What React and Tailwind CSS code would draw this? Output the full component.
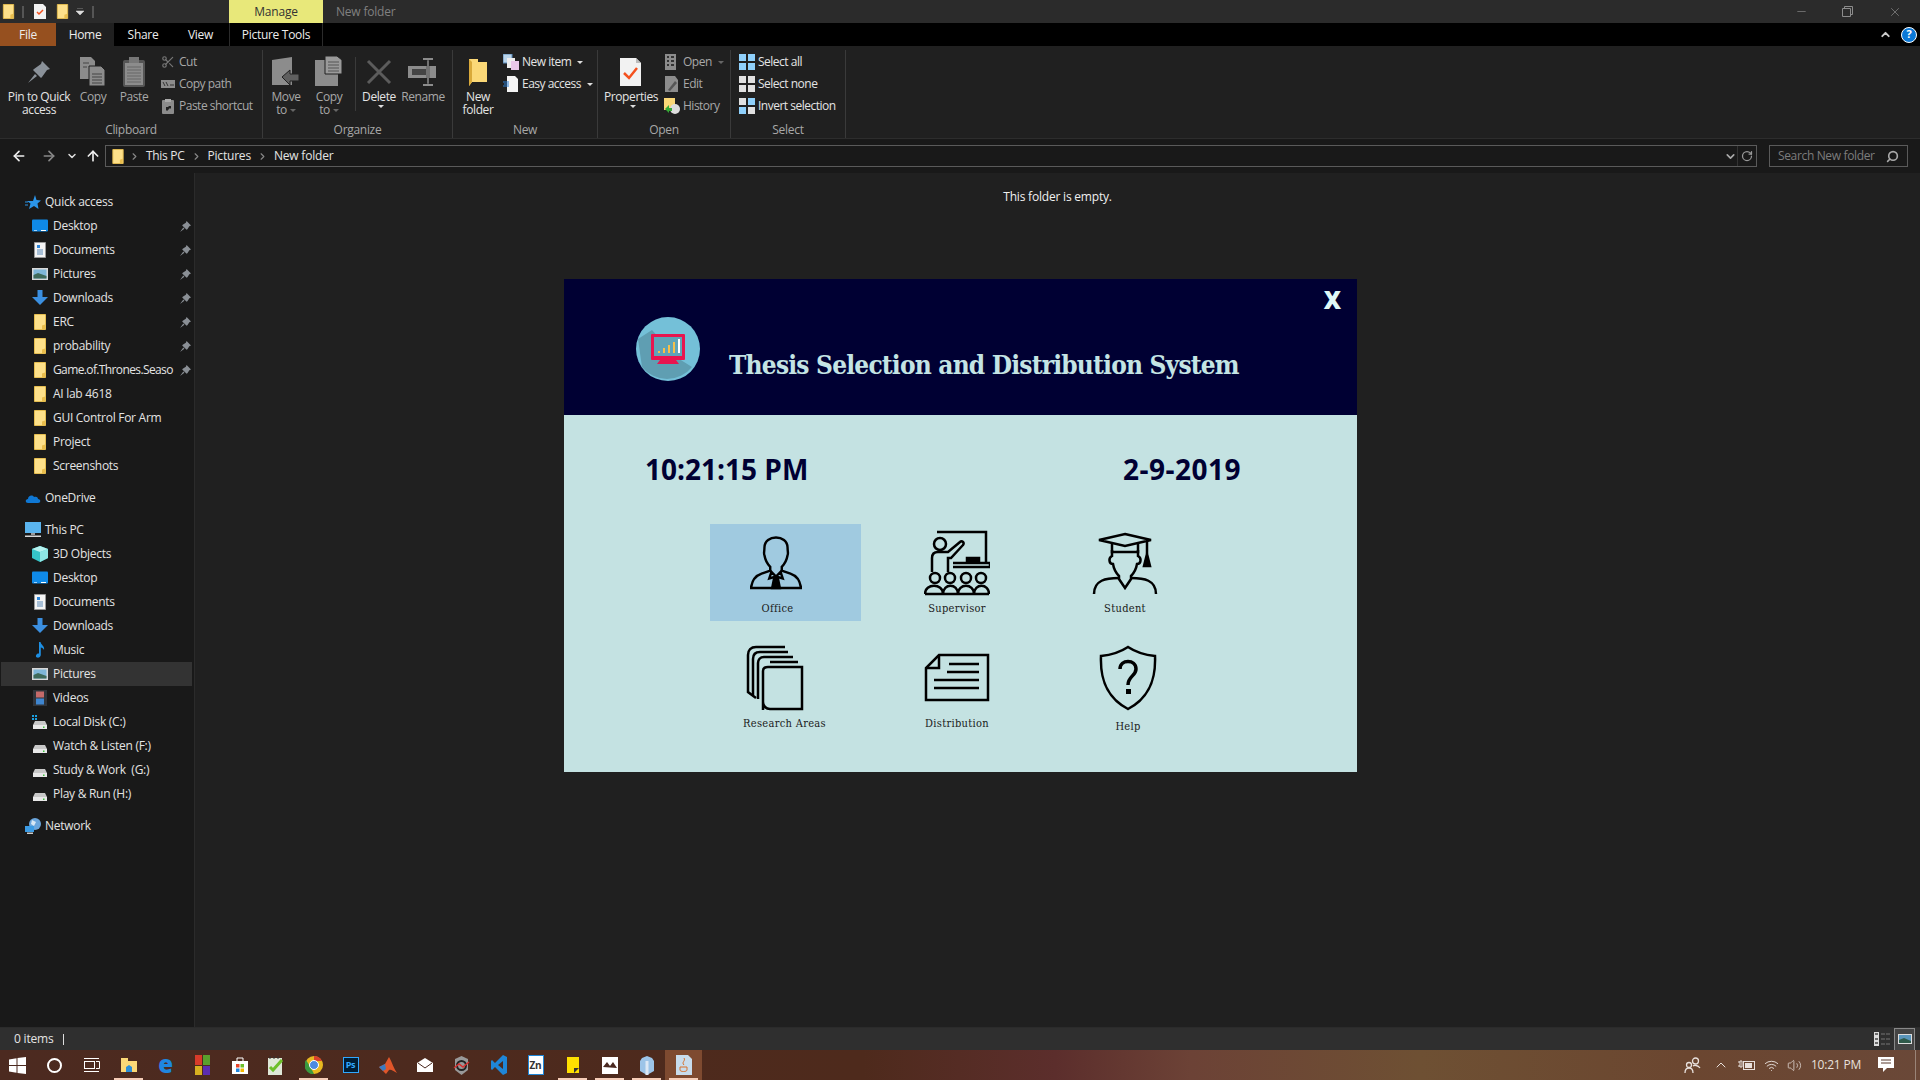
import React from "react";
import { Scissors, ChevronRight, ChevronDown, ChevronUp, ArrowLeft, ArrowRight, ArrowUp, RotateCw, Search, X, Minus, Volume2, Wifi } from "lucide-react";

const Folder = ({ w = 12, h = 16 }) => (
  <svg width={w} height={h} viewBox="0 0 12 16" className="shrink-0">
    <path d="M0.5 0.5H11.5V15.5H0.5Z" fill="#fde08a" stroke="#e5bd50" />
    <path d="M8 15V11.5L11 10.5V15Z" fill="#e9bd4c" />
  </svg>
);

const Desktop = () => (
  <svg width="16" height="16" viewBox="0 0 16 16"><rect y="1.5" width="16" height="12" rx="1" fill="#0f8ae8" /><rect x="9" y="12" width="5" height="1" fill="#fff" /><rect x="2" y="12" width="3" height="1" fill="#9fd4ff" /></svg>
);
const Doc = () => (
  <svg width="16" height="16" viewBox="0 0 16 16"><path d="M2.5 0.5H13.5V15.5H2.5Z" fill="#f4f4f4" stroke="#999" /><path d="M5 8H11M5 10H11M5 12H11" stroke="#5a8ab8" /><rect x="5" y="3" width="3" height="3" fill="#2f86d8" /></svg>
);
const Pic = () => (
  <svg width="16" height="16" viewBox="0 0 16 16"><rect y="2" width="16" height="12" fill="#d8d8d8" /><rect x="1.5" y="3.5" width="13" height="9" fill="#7fb6d8" /><path d="M1.5 9L6 7L14.5 10V12.5H1.5Z" fill="#3f6a5a" /></svg>
);
const Down = () => (
  <svg width="16" height="16" viewBox="0 0 16 16"><path d="M5.5 0H10.5V7H16L8 15L0 7H5.5Z" fill="#3b8fe0" /></svg>
);
const Cube = () => (
  <svg width="16" height="16" viewBox="0 0 16 16"><path d="M8 0L16 3V12L8 16L0 12V3Z" fill="#35c4c8" /><path d="M8 6L16 3V12L8 16Z" fill="#8ee6e4" /><path d="M8 0L16 3L8 6L0 3Z" fill="#b6f2ef" /></svg>
);
const Music = () => (
  <svg width="16" height="16" viewBox="0 0 16 16"><path d="M7 0H8.5C9 3 13 4 12 8C11.5 6.5 10 5.5 8.8 5.5V13C8.8 15 6.5 16 5 15.5C3.5 15 3.5 13 5 12C5.7 11.5 6.5 11.4 7 11.6Z" fill="#1d8fe3" /></svg>
);
const Film = () => (
  <svg width="16" height="16" viewBox="0 0 16 16"><rect x="1" width="14" height="16" fill="#30343a" /><rect x="4" y="1.5" width="8" height="6" fill="#c46a6a" /><rect x="4" y="8.5" width="8" height="6" fill="#3f86d0" /></svg>
);
const Drive = ({ win }) => (
  <svg width="16" height="16" viewBox="0 0 16 16">
    {win && <path d="M0 1H2V3H0ZM3 1H5V3H3ZM0 4H2V6H0ZM3 4H5V6H3Z" fill="#1ba1e2" />}
    <path d="M3 7H13L15 11H1Z" fill="#c8c8c8" />
    <rect x="1" y="11" width="14" height="4" fill="#e8e8e8" />
    <rect x="11" y="12.5" width="1.5" height="1.5" fill="#3fbf3f" />
  </svg>
);
const Star = () => (
  <svg width="16" height="16" viewBox="0 0 16 16"><path d="M10 1L11.5 6L16 6.5L12.5 9.5L13.5 15L9 12L4 15L5.5 9.5L2 7H8Z" fill="#2b95e9" /><path d="M0 8H3M0 11H3" stroke="#2b95e9" /></svg>
);
const Cloud = () => (
  <svg width="16" height="16" viewBox="0 0 16 16"><path d="M3 13C0 13 0 9 3 9C3 6 7 4 9 7C12 6 13 8 13 9C16 9 16 13 13 13Z" fill="#0f78d4" /></svg>
);
const Monitor = () => (
  <svg width="16" height="16" viewBox="0 0 16 16"><rect width="16" height="11" fill="#5ab4ee" /><rect x="6" y="11" width="4" height="2" fill="#9a9a9a" /><rect y="13.5" width="16" height="1.5" fill="#d8d8d8" /></svg>
);
const Globe = () => (
  <svg width="16" height="16" viewBox="0 0 16 16"><circle cx="10" cy="6" r="6" fill="#6aa5dc" /><path d="M7 2L11 4L9 8L6 6Z" fill="#d8e8f5" /><rect y="8" width="9" height="6" fill="#3b9be4" /><rect x="2" y="14.5" width="6" height="1.5" fill="#ccc" /></svg>
);
const PinSmall = () => (
  <svg width="11" height="11" viewBox="0 0 10 10"><path d="M6 0L10 4L8.5 4.7L6.7 7.5L6 8L2 4L2.5 3.3L5.3 1.5ZM3 6L0 10L4 7Z" fill="#8a8f95" /></svg>
);

const SideRow = ({ icon, label, top, pin, selected, gap, tight }) => (
  <div className={`flex items-center h-6 ${top ? "pl-[25px] gap-[4px]" : "pl-[32px] gap-[5px]"} ${gap ? "mt-2" : ""} ${selected ? "bg-[#333333] ml-px mr-[2px] !pl-[31px]" : ""}`}>
    <span className="w-4 flex justify-center shrink-0">{icon}</span>
    <span className={`text-[12px] text-[#e4e4e4] whitespace-pre w-[124px] ${tight ? "tracking-[-0.62px]" : "tracking-[-0.28px]"}`}>{label}</span>
    {pin && <span className="-ml-[2px] shrink-0"><PinSmall /></span>}
  </div>
);

const Sidebar = () => (
  <div className="w-[195px] shrink-0 bg-[#191919] border-r border-[#2b2b2b] pt-[17px]">
    <SideRow top icon={<Star />} label="Quick access" />
    <SideRow icon={<Desktop />} label="Desktop" pin />
    <SideRow icon={<Doc />} label="Documents" pin />
    <SideRow icon={<Pic />} label="Pictures" pin />
    <SideRow icon={<Down />} label="Downloads" pin />
    <SideRow icon={<Folder />} label="ERC" pin />
    <SideRow icon={<Folder />} label="probability" pin />
    <SideRow tight icon={<Folder />} label="Game.of.Thrones.Seaso" pin />
    <SideRow icon={<Folder />} label="AI lab 4618" />
    <SideRow icon={<Folder />} label="GUI Control For Arm" />
    <SideRow icon={<Folder />} label="Project" />
    <SideRow icon={<Folder />} label="Screenshots" />
    <SideRow top gap icon={<Cloud />} label="OneDrive" />
    <SideRow top gap icon={<Monitor />} label="This PC" />
    <SideRow icon={<Cube />} label="3D Objects" />
    <SideRow icon={<Desktop />} label="Desktop" />
    <SideRow icon={<Doc />} label="Documents" />
    <SideRow icon={<Down />} label="Downloads" />
    <SideRow icon={<Music />} label="Music" />
    <SideRow selected icon={<Pic />} label="Pictures" />
    <SideRow icon={<Film />} label="Videos" />
    <SideRow icon={<Drive win />} label="Local Disk (C:)" />
    <SideRow icon={<Drive />} label="Watch & Listen (F:)" />
    <SideRow icon={<Drive />} label="Study & Work  (G:)" />
    <SideRow icon={<Drive />} label="Play & Run (H:)" />
    <SideRow top gap icon={<Globe />} label="Network" />
  </div>
);

const Caret = ({ dim }) => (
  <span className={`inline-block ml-[3px] align-middle border-x-[3px] border-x-transparent border-t-[3px] ${dim ? "border-t-[#666]" : "border-t-[#ddd]"}`} />
);

const BigBtn = ({ w, icon, lines, dim, caretLine }) => (
  <div className={`${w} flex flex-col items-center shrink-0`}>
    <div className="h-[40px] pt-[3px] flex items-center justify-center">{icon}</div>
    <div className={`text-[12px] leading-[13px] text-center whitespace-nowrap tracking-[-0.4px] ${dim ? "text-[#a8a8a8]" : "text-[#e4e4e4]"}`}>
      {lines.map((l, i) => <div key={i}>{l}{caretLine === i && <Caret dim={dim} />}</div>)}
      {caretLine === lines.length && <div className="leading-[6px]"><Caret /></div>}
    </div>
  </div>
);

const SmallBtn = ({ icon, label, dim, caret, dimCaret }) => (
  <div className="flex items-center h-[22px] gap-[3px] whitespace-nowrap">
    <span className="w-4 h-4 flex items-center justify-center">{icon}</span>
    <span className={`text-[12px] tracking-[-0.5px] ${dim ? "text-[#a8a8a8]" : "text-[#e4e4e4]"}`}>{label}</span>
    {caret && <Caret dim={dimCaret} />}
  </div>
);

const SmallList = ({ className = "", children }) => <div className={`pt-[1px] ${className}`}>{children}</div>;

const Group = ({ w, label, children }) => (
  <div className={`${w} h-[88px] shrink-0 flex flex-col border-r border-[#3a3a3a]`}>
    <div className="flex-1 flex">{children}</div>
    <div className="text-[12px] leading-[16px] text-center text-[#a8a8a8] tracking-[-0.3px]">{label}</div>
  </div>
);

const PinBig = () => (
  <svg width="24" height="24" viewBox="0 0 24 24"><path d="M15 1L23 9L20 10L15 17L14 18L6 10L7 9L14 4ZM8 14L1 23L10 16Z" fill="#8a9199" /></svg>
);
const CopyBig = () => (
  <svg width="26" height="30" viewBox="0 0 26 30"><path d="M0 0H11L15 4V22H0Z" fill="#8c8c8c" /><path d="M9 9H21L25 13V29H9Z" fill="#8c8c8c" stroke="#202020" /><path d="M12 17H22M12 20H22M12 23H22M12 26H22M3 6H9M3 10H7" stroke="#444" /></svg>
);
const PasteBig = () => (
  <svg width="22" height="30" viewBox="0 0 22 30"><rect y="3" width="22" height="27" rx="2" fill="#555" /><rect x="2" y="6" width="18" height="22" fill="#8c8c8c" /><rect x="6" y="0" width="10" height="6" fill="#777" /><path d="M4 10H18M4 13H18M4 16H18M4 19H18M4 22H18M4 25H18" stroke="#666" /></svg>
);
const MoveBig = () => (
  <svg width="28" height="30" viewBox="0 0 28 30"><path d="M0 3L20 0V28H0Z" fill="#8c8c8c" /><path d="M10 20L18 13V17H27V24H18V28Z" fill="#5f5f5f" stroke="#202020" /></svg>
);
const CopyToBig = () => (
  <svg width="28" height="32" viewBox="0 0 28 32"><path d="M0 4H23V30H0Z" fill="#8c8c8c" /><path d="M10 0H22L27 4V18H10Z" fill="#9a9a9a" stroke="#202020" /><path d="M13 6H24M13 9H24M13 12H24M13 15H24" stroke="#555" /></svg>
);
const DeleteBig = () => (
  <svg width="26" height="26" viewBox="0 0 26 26"><path d="M2 2L24 24M24 2L2 24" stroke="#5c5c5c" strokeWidth="3" /></svg>
);
const RenameBig = () => (
  <svg width="30" height="28" viewBox="0 0 30 28"><rect y="8" width="28" height="12" fill="#8c8c8c" /><rect x="4" y="11" width="14" height="6" fill="#444" /><rect x="19" y="2" width="2" height="24" fill="#8c8c8c" stroke="#202020" strokeWidth="0.5" /><path d="M15 1H25M15 27H25" stroke="#8c8c8c" strokeWidth="2" /></svg>
);
const NewFolderBig = () => (
  <svg width="20" height="28" viewBox="0 0 20 28"><path d="M1 1L10 1V4H19V24H4L1 28Z" fill="#fbd877" /><path d="M1 1L4 4V24L1 28Z" fill="#d9a93a" /></svg>
);
const PropsBig = () => (
  <svg width="22" height="28" viewBox="0 0 22 28"><path d="M0 0H16L21 5V28H0Z" fill="#f2f2f2" /><path d="M16 0V5H21" fill="#bbb" /><path d="M4 15L9 20L17 10" stroke="#f4511e" strokeWidth="2.5" fill="none" /></svg>
);
const TileGrid = ({ a, b, c, d }) => (
  <svg width="16" height="16" viewBox="0 0 16 16"><rect width="7" height="7" fill={a} /><rect x="9" width="7" height="7" fill={b} /><rect y="9" width="7" height="7" fill={c} /><rect x="9" y="9" width="7" height="7" fill={d} /></svg>
);

const Ribbon = () => (
  <div className="h-[93px] bg-[#202020] border-b border-[#2d2d2d] flex items-start pt-[4px] shrink-0">
    <Group w="w-[263px]" label="Clipboard">
      <BigBtn w="w-[78px]" icon={<PinBig />} lines={["Pin to Quick", "access"]} />
      <BigBtn w="w-[30px]" icon={<CopyBig />} lines={["Copy"]} dim />
      <BigBtn w="w-[52px]" icon={<PasteBig />} lines={["Paste"]} dim />
      <SmallList>
        <SmallBtn icon={<Scissors size={14} color="#777" />} label="Cut" dim />
        <SmallBtn icon={<svg width="14" height="8"><rect width="14" height="8" fill="#8c8c8c" /><path d="M2 2L4 6M5 2L7 6M9 5H13" stroke="#333" /></svg>} label="Copy path" dim />
        <SmallBtn icon={<svg width="12" height="15"><rect y="1" width="12" height="14" rx="1" fill="#8c8c8c" /><rect x="3" width="6" height="3" fill="#aaa" /><path d="M4 11V8H7L6 7H9V10L8 9L5 12" fill="#222" /></svg>} label="Paste shortcut" dim />
      </SmallList>
    </Group>
    <Group w="w-[190px]" label="Organize">
      <BigBtn w="w-[46px]" icon={<MoveBig />} lines={["Move", "to"]} caretLine={1} dim />
      <BigBtn w="w-[40px]" icon={<CopyToBig />} lines={["Copy", "to"]} caretLine={1} dim />
      <div className="w-px h-[54px] mt-[7px] ml-[6px] bg-[#3a3a3a]" />
      <BigBtn w="w-[46px]" icon={<DeleteBig />} lines={["Delete"]} caretLine={1} />
      <BigBtn w="w-[42px]" icon={<RenameBig />} lines={["Rename"]} dim />
    </Group>
    <Group w="w-[145px]" label="New">
      <BigBtn w="w-[50px]" icon={<NewFolderBig />} lines={["New", "folder"]} />
      <SmallList>
        <SmallBtn icon={<svg width="16" height="16"><rect width="9" height="9" fill="#b9d4ea" stroke="#5a8ab8" /><rect x="4" y="4" width="8" height="10" fill="#eee" /><rect x="8" y="7" width="8" height="9" fill="#e8c8e8" /></svg>} label="New item" caret />
        <SmallBtn icon={<svg width="16" height="16"><path d="M4 0H12L15 3V16H4Z" fill="#f4f4f4" /><path d="M0 6H6M1 8H6M0 10H6" stroke="#2b7fd4" /></svg>} label="Easy access" caret />
      </SmallList>
    </Group>
    <Group w="w-[133px]" label="Open">
      <BigBtn w="w-[66px]" icon={<PropsBig />} lines={["Properties"]} caretLine={1} />
      <SmallList>
        <SmallBtn icon={<svg width="14" height="16"><path d="M0 0H11V16H0Z" fill="#8c8c8c" /><path d="M2 3H4M6 3H9M2 7H4M6 7H9M2 11H4M6 11H9" stroke="#333" strokeWidth="2" /></svg>} label="Open" dim caret dimCaret />
        <SmallBtn icon={<svg width="14" height="16"><path d="M0 0H10L13 4V16H0Z" fill="#8c8c8c" /><path d="M3 14L10 5L12 7L5 15Z" fill="#555" /></svg>} label="Edit" dim />
        <SmallBtn icon={<svg width="16" height="16"><rect width="11" height="12" fill="#fbd877" /><circle cx="11" cy="11" r="5" fill="#ddd" /><path d="M1 11L5 7V10H8V13H5V15Z" fill="#35a835" /></svg>} label="History" dim />
      </SmallList>
    </Group>
    <Group w="w-[115px]" label="Select">
      <SmallList className="pl-2">
        <SmallBtn icon={<TileGrid a="#8fd0fb" b="#8fd0fb" c="#8fd0fb" d="#8fd0fb" />} label="Select all" />
        <SmallBtn icon={<TileGrid a="#e0e0e0" b="#e0e0e0" c="#e0e0e0" d="#e0e0e0" />} label="Select none" />
        <SmallBtn icon={<TileGrid a="#e0e0e0" b="#8fd0fb" c="#8fd0fb" d="#e0e0e0" />} label="Invert selection" />
      </SmallList>
    </Group>
  </div>
);

const Crumb = ({ label }) => (
  <>
    <ChevronRight size={11} color="#888" strokeWidth={2.5} className="mx-[6px] shrink-0" />
    <span className="text-[12px] text-[#e4e4e4]">{label}</span>
  </>
);

const AddressBar = () => (
  <div className="h-[34px] bg-[#191919] flex items-center pl-[11px] pr-3 shrink-0">
    <ArrowLeft size={16} color="#eee" strokeWidth={2.5} />
    <ArrowRight size={16} color="#888" strokeWidth={2.5} className="ml-[14px]" />
    <ChevronDown size={12} color="#ddd" strokeWidth={3} className="ml-[9px]" />
    <ArrowUp size={16} color="#eee" strokeWidth={2.5} className="ml-[7px]" />
    <div className="ml-[4px] flex-1 h-[22px] border border-[#5a5a5a] flex items-center pl-[6px]">
      <Folder w={12} h={15} />
      <ChevronRight size={11} color="#888" strokeWidth={2.5} className="ml-[5px] mr-[6px]" />
      <span className="text-[12px] text-[#e4e4e4] tracking-[-0.3px]">This PC</span>
      <Crumb label="Pictures" />
      <Crumb label="New folder" />
      <ChevronDown size={13} color="#aaa" strokeWidth={3} className="ml-auto mr-0" />
      <div className="w-px h-full bg-[#333]" />
      <RotateCw size={12} color="#999" strokeWidth={2.5} className="mx-[3px]" />
    </div>
    <div className="ml-3 w-[139px] h-[22px] border border-[#5a5a5a] flex items-center justify-between pl-2 pr-[8px]">
      <span className="text-[12px] text-[#7c7c7c] tracking-[-0.35px]">Search New folder</span>
      <Search size={13} color="#aaa" strokeWidth={3} className="-scale-x-100" />
    </div>
  </div>
);

const TitleBar = () => (
  <div className="h-[23px] bg-[#2b2b2b] flex items-center shrink-0">
    <div className="w-[229px] flex items-center pl-[2px]">
      <Folder w={13} h={15} />
      <div className="w-[2px] h-3 bg-[#555] mx-[7px]" />
      <svg width="12" height="15" viewBox="0 0 12 15" className="ml-[3px]"><path d="M0 0H9L12 3V15H0Z" fill="#f2f2f2" /><path d="M3 8L5 10L9 6" stroke="#f4511e" strokeWidth="1.5" fill="none" /></svg>
      <span className="w-[10px]" />
      <Folder w={13} h={15} />
      <svg width="8" height="8" viewBox="0 0 8 8" className="ml-[7px]"><path d="M1 0H7M0 3H8L4 7Z" fill="#ddd" stroke="#ddd" strokeWidth="0.5" /></svg>
      <div className="w-[2px] h-3 bg-[#555] ml-[8px]" />
    </div>
    <div className="w-[94px] h-full bg-[#e8e87a] text-[12px] text-[#333] flex items-center justify-center">Manage</div>
    <div className="text-[12px] text-[#808080] ml-[13px]">New folder</div>
    <div className="ml-auto flex items-center text-[#8c8c8c]">
      <div className="w-[46px] flex justify-center"><Minus size={13} strokeWidth={1.2} /></div>
      <div className="w-[46px] flex justify-center">
        <svg width="11" height="11" viewBox="0 0 11 11" fill="none" stroke="currentColor"><path d="M0.5 2.5H8.5V10.5H0.5ZM2.5 2.5V0.5H10.5V8.5H8.5" /></svg>
      </div>
      <div className="w-[50px] flex justify-center"><X size={14} strokeWidth={1.2} /></div>
    </div>
  </div>
);

const TabBar = () => (
  <div className="h-[23px] bg-black flex items-stretch shrink-0 text-[12px] text-[#ececec] tracking-[-0.3px]">
    <div className="w-[56px] bg-[#96501f] flex items-center justify-center">File</div>
    <div className="w-[58px] bg-[#202020] flex items-center justify-center">Home</div>
    <div className="w-[58px] flex items-center justify-center">Share</div>
    <div className="w-[57px] flex items-center justify-center">View</div>
    <div className="w-[94px] border-x border-[#2b2b2b] flex items-center justify-center">Picture Tools</div>
    <div className="ml-auto flex items-center">
      <ChevronUp size={13} color="#ccc" strokeWidth={3.5} className="mr-[9px]" />
      <div className="w-[16px] h-[16px] rounded-full bg-[#0a78d7] border border-white text-white text-[11px] font-bold flex items-center justify-center mr-[3px]">?</div>
    </div>
  </div>
);

const LogoIcon = () => (
  <svg width="64" height="64" viewBox="0 0 64 64">
    <circle cx="32" cy="32" r="32" fill="#74c0d8" />
    <path d="M2 22L16 13L40 40L56 50A32 32 0 0 1 6 50Z" fill="#5f9eb2" />
    <rect x="15" y="17" width="34" height="26" rx="1" fill="#e8154f" />
    <rect x="18" y="20" width="28" height="19" fill="#5fa4b8" />
    <path d="M24 43H40L43 47H21Z" fill="#e8154f" />
    <path d="M23 36V34M28 36V31M33 36V28M38 36V25" stroke="#f5c04a" strokeWidth="2" />
    <path d="M43 36V22" stroke="#fff" strokeWidth="2" />
  </svg>
);

const OfficeIcon = () => (
  <svg width="52" height="56" viewBox="0 0 54 56" fill="none" stroke="#000" strokeWidth="2.5">
    <path d="M15 12C15 -2 39 -2 39 12C39 16 40 18 39 20C38 26 35 30 33 32V36L42 39C48 41 52 46 53 54H1C2 46 6 41 12 39L21 36V32C19 30 16 26 15 20C14 18 15 16 15 12Z" />
    <path d="M21 36L27 42L33 36M22 38L20 44L27 42L34 44L32 38" />
    <path d="M25 44H29L31 54H23Z" fill="#000" />
  </svg>
);
const SupervisorIcon = () => (
  <svg width="66" height="66" viewBox="0 0 66 66" fill="none" stroke="#000" strokeWidth="2.5">
    <path d="M13 2H62V32M29 37H66V33H29" />
    <rect x="43" y="28" width="12" height="4" fill="#000" />
    <circle cx="16" cy="14" r="6" />
    <path d="M8 42V28C8 24 10 22 14 22H24L36 12C38 10 41 13 39 15L27 28H24V42" />
    <g>
      <circle cx="11" cy="48" r="5" /><circle cx="26" cy="48" r="5" /><circle cx="42" cy="48" r="5" /><circle cx="57" cy="48" r="5" />
      <path d="M1 64C1 53 19 53 19 64M19 64C19 53 34 53 34 64M34 64C34 53 50 53 50 64M50 64C50 53 65 53 65 64M1 64H65" />
    </g>
  </svg>
);
const StudentIcon = () => (
  <svg width="66" height="62" viewBox="0 0 66 62" fill="none" stroke="#000" strokeWidth="2.5">
    <path d="M33 2L59 8L33 14L7 8Z" />
    <path d="M20 12V20H46V12" />
    <path d="M20 18V24C16 26 17 32 21 32C22 38 25 42 27 44V47L33 56L39 47V44C41 42 44 38 45 32C49 32 50 26 46 24V18" />
    <path d="M27 46C14 46 2 48 2 62M39 46C52 46 64 48 64 62" />
    <path d="M55 9V22" />
    <path d="M55 22L58 34H52Z" fill="#000" />
  </svg>
);
const ResearchIcon = () => (
  <svg width="58" height="66" viewBox="0 0 58 66" fill="none" stroke="#000" strokeWidth="2.5">
    <path d="M39 2H10C5 2 2 5 2 10V47L10 53" />
    <path d="M42 7H14C9 7 7 10 7 14V50" />
    <path d="M47 12H18C14 12 12 15 12 18V54" />
    <path d="M52 17H24M17 65V26C17 23 19 22 22 22H56V64H24C20 64 17 61 17 57" />
  </svg>
);
const DistributionIcon = () => (
  <svg width="66" height="50" viewBox="0 0 66 50" fill="none" stroke="#000" strokeWidth="2.5">
    <path d="M15 2H64V47H2V15Z" />
    <path d="M15 2V15H2" />
    <path d="M25 11H55M23 19H55M10 27H55M10 35H55" />
  </svg>
);
const HelpIcon = () => (
  <svg width="58" height="66" viewBox="0 0 58 66" fill="none" stroke="#000" strokeWidth="2.5">
    <path d="M29 2C38 8 46 10 56 11C57 35 50 53 29 64C8 53 1 35 2 11C12 10 20 8 29 2Z" />
    <path d="M21 24C21 14 37 14 37 24C37 31 29 31 29 40" strokeWidth="3.5" />
    <rect x="27" y="44" width="5" height="5" fill="#000" stroke="none" />
  </svg>
);

const Tile = ({ w, icon, label, iconPad, labelPad = "", bottom, active }) => (
  <div className={`${w} flex flex-col items-center ${bottom} ${active ? "bg-[#a0cae0]" : ""}`}>
    <div className={`flex-1 flex items-center ${iconPad}`}>{icon}</div>
    <div className={`text-[11px] leading-4 text-[#1a1a1a] whitespace-nowrap [font-family:'DejaVu_Serif_Condensed','DejaVu_Serif',serif] tracking-[0.3px] ${labelPad}`}>{label}</div>
  </div>
);

const ThesisWindow = () => (
  <div className="absolute left-[564px] top-[279px] w-[793px] h-[493px] flex flex-col">
    <div className="h-[136px] bg-[#000033] relative flex items-start pl-[72px] pt-[38px] shrink-0">
      <LogoIcon />
      <div className="ml-[29px] mt-[28px] text-[26px] leading-[40px] font-bold text-[#c4e4e4] whitespace-nowrap tracking-[-0.8px] [font-family:'DejaVu_Serif_Condensed','DejaVu_Serif',serif]">Thesis Selection and Distribution System</div>
      <div className="absolute right-[16px] top-[3px] text-[24px] leading-9 font-extrabold text-[#dff8f8] [font-family:'Open_Sans',sans-serif]">X</div>
    </div>
    <div className="flex-1 bg-[#c4e2e2]">
      <div className="flex pl-[81px] pt-[36px] text-[28px] leading-9 font-bold tracking-normal text-[#000033] [font-family:'Open_Sans',sans-serif]">
        <div className="w-[478px]">10:21:15 PM</div>
        <div className="tracking-[0.5px]">2-9-2019</div>
      </div>
      <div className="ml-[146px] mt-[37px] grid grid-cols-[151px_192px_144px] grid-rows-[97px_95px] gap-y-[19px]">
        <Tile active w="w-[151px]" bottom="pb-[4px]" icon={<OfficeIcon />} iconPad="pr-[20px]" label="Office" labelPad="pr-[16px]" />
        <Tile w="w-[192px]" bottom="pb-[4px]" icon={<SupervisorIcon />} label="Supervisor" />
        <Tile w="w-[144px]" bottom="pb-[4px]" icon={<StudentIcon />} label="Student" />
        <Tile w="w-[151px]" bottom="pb-[3px]" icon={<ResearchIcon />} iconPad="pr-[22px]" label="Research Areas" labelPad="pr-[2px]" />
        <Tile w="w-[192px]" bottom="pb-[3px]" icon={<DistributionIcon />} label="Distribution" />
        <Tile w="w-[144px]" bottom="pb-0" icon={<HelpIcon />} iconPad="pl-[6px] pb-[3px]" label="Help" labelPad="pl-[6px]" />
      </div>
    </div>
  </div>
);

const StatusBar = () => (
  <div className="h-[23px] bg-[#2f2f2f] flex items-center pl-[14px] text-[12px] text-[#e4e4e4] shrink-0 border-t border-[#2b2b2b]">
    <span>0 items</span>
    <div className="w-px h-[11px] bg-[#ddd] ml-[10px]" />
    <div className="ml-auto flex items-center">
      <svg width="16" height="14" viewBox="0 0 16 14" className="mr-[4px]">
        <path d="M0 0H5V14H0Z" fill="#ddd" /><path d="M1 2H4M1 7H4M1 11H4" stroke="#444" strokeWidth="1.5" />
        <path d="M7 2H16M7 7H16M7 12H16" stroke="#777" strokeDasharray="4 1" />
      </svg>
      <div className="w-[21px] h-[23px] bg-[#444] border border-[#888] flex items-center justify-center mr-[5px]">
        <svg width="14" height="10" viewBox="0 0 14 10"><rect width="14" height="10" fill="#ddd" /><rect x="1" y="1" width="12" height="8" fill="#5a96bc" /><path d="M1 6L6 4L13 7V9H1Z" fill="#2f5a4a" /></svg>
      </div>
    </div>
  </div>
);

const Win = () => <svg width="17" height="17" viewBox="0 0 17 17"><path d="M0 2.5L7.5 1.3V8H0ZM8.5 1.1L17 0V8H8.5ZM0 9H7.5V15.7L0 14.5ZM8.5 9H17V17L8.5 15.9Z" fill="#fff" /></svg>;

const taskIcons = [
  { icon: <Win /> },
  { icon: <div className="w-[15px] h-[15px] rounded-full border-2 border-white" /> },
  { icon: <svg width="16" height="16" viewBox="0 0 16 16" fill="none" stroke="#fff"><rect x="0.5" y="4.5" width="10" height="7" /><path d="M12 4.5H15.5V11.5H12M0 1.5H15M0 14.5H15" /></svg> },
  { on: true, icon: <svg width="18" height="16" viewBox="0 0 18 16"><path d="M1 1H8V4H17V15H1Z" fill="#fbd877" /><path d="M6 15V10L9 8L12 10V15Z" fill="#2b8fd8" /></svg> },
  { icon: <span className="text-[#1f86e0] text-[24px] leading-[30px] font-extrabold [font-family:'Open_Sans',sans-serif] -mt-[3px]">e</span> },
  { icon: <svg width="15" height="20" viewBox="0 0 15 20"><rect width="7" height="10" fill="#d83b2a" /><rect x="8" width="7" height="10" fill="#5aa02c" /><rect y="11" width="7" height="9" fill="#d8b020" /><rect x="8" y="11" width="7" height="9" fill="#5c2db0" /></svg> },
  { icon: <svg width="16" height="17" viewBox="0 0 16 17"><rect y="4" width="16" height="13" fill="#fff" /><path d="M5 4V1H11V4" fill="none" stroke="#fff" /><rect x="4" y="7" width="3.5" height="3.5" fill="#e8452c" /><rect x="8.5" y="7" width="3.5" height="3.5" fill="#6cbf2a" /><rect x="4" y="11.5" width="3.5" height="3.5" fill="#1f86e0" /><rect x="8.5" y="11.5" width="3.5" height="3.5" fill="#f5b800" /></svg> },
  { icon: <svg width="17" height="20" viewBox="0 0 17 20"><rect y="3" width="14" height="17" fill="#dfe8d8" /><path d="M2 12L5 15L14 5" stroke="#6cbf2a" strokeWidth="3" fill="none" /><path d="M2 1V4M6 1V4M10 1V4" stroke="#333" /></svg> },
  { on: true, icon: <svg width="18" height="18" viewBox="0 0 18 18"><circle cx="9" cy="9" r="9" fill="#e8b820" /><path d="M9 0A9 9 0 0 1 17 5H9Z" fill="#d8402c" /><path d="M1 4L6 12L9 18A9 9 0 0 1 1 4Z" fill="#3a9a40" /><circle cx="9" cy="9" r="4.5" fill="#4a8ae0" stroke="#fff" /></svg> },
  { icon: <div className="w-4 h-4 border border-[#31a8ff] bg-[#001e36] text-[#31a8ff] text-[9px] leading-[14px] text-center font-bold">Ps</div> },
  { icon: <svg width="18" height="17" viewBox="0 0 18 17"><path d="M0 10L6 7L10 0C13 5 15 12 18 16C14 14 12 12 10 13L7 17Z" fill="#e0562a" /><path d="M0 10L6 7L7 12L4 14Z" fill="#3a7ac0" /></svg> },
  { icon: <svg width="16" height="14" viewBox="0 0 16 14"><path d="M0 5L8 0L16 5V14H0Z" fill="#fff" /><path d="M1 5L8 10L15 5" stroke="#4a2820" fill="none" /></svg> },
  { icon: <svg width="17" height="19" viewBox="0 0 17 19" fill="none"><path d="M8.5 0L15 3V14L8.5 19L2 14V3Z" fill="#999" /><circle cx="8.5" cy="9.5" r="4.5" stroke="#222" strokeWidth="2" /><path d="M1 12L6 8L10 11L16 6" stroke="#d83030" strokeWidth="1.5" /></svg> },
  { icon: <svg width="16" height="20" viewBox="0 0 16 20"><path d="M12 0L16 2V18L12 20L4 12L1 15L0 14V6L1 5L4 8ZM12 6L7 10L12 14Z" fill="#1f86d8" /></svg> },
  { icon: <div className="w-4 h-5 bg-white border border-[#1f86d8] text-[#333] text-[10px] leading-[18px] text-center font-bold">Zn</div> },
  { on: true, icon: <svg width="12" height="16" viewBox="0 0 12 16"><path d="M0 0H12V16H0Z" fill="#ffe000" /><path d="M7 16V11H12Z" fill="#333" /></svg> },
  { on: true, icon: <svg width="16" height="17" viewBox="0 0 16 17"><rect width="16" height="17" fill="#fff" /><path d="M1 10L5 5L8 9L11 5L15 11V9L15 11Z" fill="#4a2820" /></svg> },
  { on: true, icon: <svg width="14" height="19" viewBox="0 0 14 19"><path d="M2 2L7 0L12 2L14 5V15L7 19L0 15V5Z" fill="#9cc4e8" /><path d="M7 5V19" stroke="#dce8f5" strokeWidth="3" /></svg> },
  { on: true, active: true, icon: <svg width="16" height="20" viewBox="0 0 16 20"><path d="M0 0H12L16 4V20H0Z" fill="#c8dcec" /><path d="M8 3C10 6 5 7 8 10M4 12H11V15C11 17 4 17 4 15Z" stroke="#d8702a" fill="none" /></svg> },
];

const TaskSlot = ({ on, active, icon }) => (
  <div className={`w-[37px] h-full relative flex items-center justify-center shrink-0 ${active ? "bg-[#7e4a30]" : ""}`}>
    {icon}
    {on && <div className="absolute bottom-0 left-[4px] right-[4px] h-[2px] bg-[#f5cdb8]" />}
  </div>
);

const Taskbar = () => (
  <div className="h-[30px] bg-[linear-gradient(90deg,#4c2a20_0%,#4e2a1c_45%,#5c2e2c_55%,#6c4236_62%,#6e5033_74%,#6b4630_88%,#6a4838_100%)] flex items-center shrink-0 -ml-px">
    {taskIcons.map((t, i) => <TaskSlot key={i} {...t} />)}
    <div className="ml-auto flex items-center h-full text-[#e8e0dc]">
      <div className="w-[29px] flex justify-center">
        <svg width="17" height="17" viewBox="0 0 17 17" fill="none" stroke="currentColor" strokeWidth="1.3"><circle cx="11.5" cy="4" r="3" /><circle cx="5" cy="8" r="2.5" /><path d="M1 16C1 12 3 11 5 11C7 11 9 12 9 16M9 9C10 8 14 8 16 11" /></svg>
      </div>
      <div className="w-[27px] flex justify-center"><ChevronUp size={16} strokeWidth={1.5} /></div>
      <div className="w-[25px] flex justify-center">
        <svg width="17" height="12" viewBox="0 0 17 12"><path d="M0 3H2M0 7H2M2 2H4V8H2Z" stroke="currentColor" fill="none" /><rect x="5.5" y="2.5" width="11" height="8" fill="none" stroke="currentColor" /><rect x="7" y="4" width="7" height="5" fill="currentColor" /></svg>
      </div>
      <div className="w-[24px] flex justify-center"><Wifi size={15} strokeWidth={1.5} /></div>
      <div className="w-[22px] flex justify-center"><Volume2 size={15} strokeWidth={1.2} /></div>
      <div className="w-[62px] text-center text-[12px]">10:21 PM</div>
      <div className="w-[38px] flex justify-center">
        <svg width="16" height="16" viewBox="0 0 16 16"><path d="M0 0H16V11H9L5 15V11H0Z" fill="#fff" /><path d="M3 3H13M3 6H13" stroke="#5a3a2c" /></svg>
      </div>
      <div className="w-[15px] h-full"><div className="ml-[10px] w-px h-full bg-[#9a8478]" /></div>
    </div>
  </div>
);

export default function App() {
  return (
    <div className="w-[1920px] h-[1080px] relative overflow-hidden flex flex-col bg-[#202020] [font-family:'Open_Sans',sans-serif] tracking-[-0.2px]">
      <TitleBar />
      <TabBar />
      <Ribbon />
      <AddressBar />
      <div className="flex-1 flex min-h-0">
        <Sidebar />
        <div className="flex-1 bg-[#202020] text-center text-[12px] text-[#f0f0f0] pt-[15px]">This folder is empty.</div>
      </div>
      <StatusBar />
      <Taskbar />
      <ThesisWindow />
    </div>
  );
}
